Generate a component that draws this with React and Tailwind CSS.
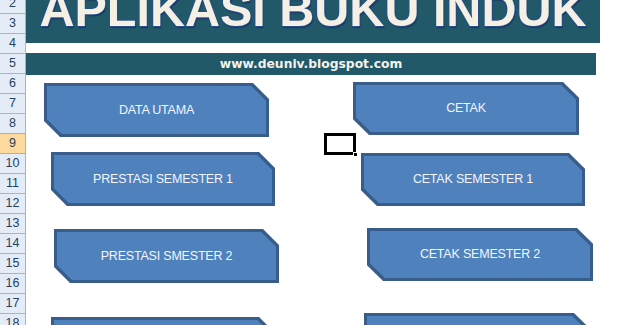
const rows = [2, 3, 4, 5, 6, 7, 8, 9, 10, 11, 12, 13, 14, 15, 16, 17, 18];

function RowHead({ n }) {
  let cls =
    "h-[20px] shrink-0 flex items-center justify-center border-r border-b bg-[#e4ecf7] border-[#9eb6ce] text-[12.5px] text-[#27415f]";
  if (n === 8) {
    cls =
      "h-[20px] shrink-0 flex items-center justify-center border-r border-b bg-[#e4ecf7] border-r-[#9eb6ce] border-b-[#f2a347] text-[12.5px] text-[#27415f]";
  }
  if (n === 9) {
    cls =
      "h-[20px] shrink-0 flex items-center justify-center border-r border-b bg-[#fcd99c] border-[#f2a347] text-[12.5px] text-[#27415f]";
  }
  return <div className={cls}>{n}</div>;
}

function Shape({ label, className }) {
  return (
    <div
      className={
        "shrink-0 bg-[#385d8a] p-[3px] [clip-path:polygon(0_0,92.9%_0,100%_29.6%,100%_100%,7.1%_100%,0_70.4%)] " +
        className
      }
    >
      <div className="h-full w-full bg-[#4f81bd] [clip-path:polygon(0_0,93.2%_0,100%_30.8%,100%_100%,6.8%_100%,0_69.2%)] flex items-center justify-center text-[12.5px] tracking-[-0.2px] text-[#f3f6fb] whitespace-nowrap">
        {label}
      </div>
    </div>
  );
}

export default function App() {
  return (
    <div className="relative flex h-[325px] w-[620px] overflow-hidden bg-white font-['Liberation_Sans',Arial,sans-serif]">
      {/* row headers */}
      <div className="w-[26px] shrink-0 flex flex-col -mt-[6px]">
        {rows.map((n) => (
          <RowHead key={n} n={n} />
        ))}
      </div>

      <div className="flex flex-col">
        {/* title banner */}
        <div className="h-[43px] shrink-0 w-[574px] bg-[#215968] overflow-hidden flex justify-center">
          <span className="-mt-[15px] text-[48.5px] leading-none font-bold text-[#f4f0e4] whitespace-nowrap [text-shadow:1px_0_0_#2a4f8a,-1px_0_0_#2a4f8a,0_-1px_0_#2a4f8a,0_1px_0_#2a4f8a,1px_2px_1px_#1a3563]">
            APLIKASI BUKU INDUK
          </span>
        </div>

        {/* url band */}
        <div className="mt-[10px] h-[22px] shrink-0 w-[570px] bg-[#215968] flex items-center justify-center">
          <span className="font-['DejaVu_Sans',Verdana,sans-serif] font-bold text-[12.3px] text-[#f4f2ea] leading-none">
            www.deuniv.blogspot.com
          </span>
        </div>

        {/* buttons */}
        <div className="flex shrink-0">
          <div className="w-[327px] shrink-0 flex flex-col items-start">
            <Shape label="DATA UTAMA" className="ml-[18px] mt-[8px] w-[225px] h-[54px]" />
            <Shape label="PRESTASI SEMESTER 1" className="ml-[25px] mt-[15px] w-[224px] h-[54px]" />
            <Shape label="PRESTASI SMESTER 2" className="ml-[28px] mt-[23px] w-[225px] h-[54px]" />
            <Shape label="" className="ml-[25px] mt-[34px] w-[224px] h-[54px]" />
          </div>
          <div className="flex flex-col items-start">
            <Shape label="CETAK" className="mt-[7px] w-[226px] h-[53px]" />
            <Shape label="CETAK SEMESTER 1" className="ml-[8px] mt-[18px] w-[224px] h-[53px]" />
            <Shape label="CETAK SEMESTER 2" className="ml-[14px] mt-[22px] w-[226px] h-[53px]" />
            <Shape label="" className="ml-[11px] mt-[32px] w-[226px] h-[53px]" />
          </div>
        </div>
      </div>

      {/* active cell */}
      <div className="absolute left-[324px] top-[133px] w-[32px] h-[22px] border-[3px] border-black">
        <div className="absolute -right-[5px] -bottom-[5px] w-[5px] h-[5px] bg-black border border-white" />
      </div>
    </div>
  );
}
